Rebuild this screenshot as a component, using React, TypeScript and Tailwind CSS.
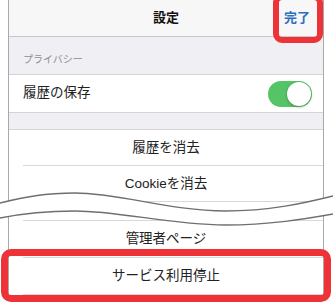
import React from "react";

function Toggle() {
  return (
    <div className="relative w-[44px] h-[26px] rounded-full bg-[#55c467]">
      <span className="absolute right-[1px] top-[1px] w-[24px] h-[24px] rounded-full bg-white shadow-[0_1px_3px_rgba(0,0,0,0.3)]" />
    </div>
  );
}

function CenterRow({ label, h = "h-[36px]", sep = true }: { label: string; h?: string; sep?: boolean }) {
  return (
    <div className={`relative ${h} flex items-center justify-center bg-white text-[13.5px] text-[#222]`}>
      {label}
      {sep && <span className="absolute left-[14px] right-0 bottom-0 h-px bg-[#d8d8dc]" />}
    </div>
  );
}

export default function App() {
  return (
    <div className="relative w-[333px] h-[305px] overflow-hidden bg-white font-['Liberation_Sans','Noto_Sans_CJK_JP',sans-serif]">
      {/* settings frame */}
      <div className="ml-[8px] w-[316px] border-x border-[#a9a9a9]">
        {/* nav bar */}
        <div className="relative h-[37px] flex items-center justify-center bg-[#f7f7f7] border-b border-[#c8c7cc]">
          <span className="text-[13px] font-bold text-[#111]">設定</span>
          <span className="absolute right-[13px] text-[13px] font-bold text-[#2c6fbf]">完了</span>
        </div>

        {/* privacy section */}
        <div className="h-[38px] flex items-end pl-[14px] pb-[7px] bg-[#efeff4] border-b border-[#d4d4d8]">
          <span className="text-[10px] text-[#8e8e93]">プライバシー</span>
        </div>
        <div className="h-[38px] flex items-center justify-between pl-[14px] pr-[11px] bg-white border-b border-[#d4d4d8]">
          <span className="text-[13.5px] text-[#222]">履歴の保存</span>
          <Toggle />
        </div>

        <div className="h-[17px] bg-[#efeff4] border-b border-[#d4d4d8]" />

        <CenterRow label="履歴を消去" />
        <CenterRow label="Cookieを消去" />
        <CenterRow label="" h="h-[19px]" />
        <CenterRow label="管理者ページ" h="h-[37px]" />
        <CenterRow label="サービス利用停止" h="h-[37px]" />
      </div>

      {/* torn break */}
      <svg className="absolute left-0 top-[180px]" width="333" height="50" viewBox="0 180 333 50">
        <path
          d="M0 203 C25 197 45 193 75 193 C120 193 170 211 225 211 C270 211 305 203 333 196 L333 214 C305 219 270 225 225 225 C170 225 120 211 75 211 C45 211 25 213 0 218 Z"
          fill="#fff"
        />
        <path d="M0 203 C25 197 45 193 75 193 C120 193 170 211 225 211 C270 211 305 203 333 196" fill="none" stroke="#6f6f6f" strokeWidth="1.3" />
        <path d="M0 218 C25 213 45 211 75 211 C120 211 170 225 225 225 C270 225 305 219 333 214" fill="none" stroke="#6f6f6f" strokeWidth="1.3" />
      </svg>

      {/* highlight boxes */}
      <div className="absolute left-[273px] top-[-6px] w-[50px] h-[49px] rounded-[9px] border-[6px] border-[#ee3338]" />
      <div className="absolute left-[1px] top-[249px] w-[330px] h-[53px] rounded-[10px] border-[7px] border-[#ee3338]" />
    </div>
  );
}
